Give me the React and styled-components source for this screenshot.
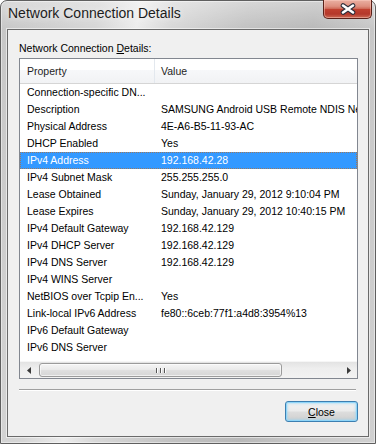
import React from "react";
import styled, { createGlobalStyle, css } from "styled-components";

const GlobalStyle = createGlobalStyle`
  html, body { margin: 0; padding: 0; background: #ffffff; }
  body {
    width: 376px; height: 444px; overflow: hidden;
    font-family: "Liberation Sans", Arial, sans-serif;
  }
  * { box-sizing: border-box; }
`;

const Window = styled.div`
  width: 376px;
  height: 444px;
  border: 1px solid #5f5f5f;
  border-radius: 7px 7px 0 0;
  background:
    linear-gradient(to bottom, rgba(255,255,255,0.35) 0px, rgba(255,255,255,0) 28px),
    linear-gradient(100deg, #c6c6c6 0%, #d6d6d6 22%, #ececec 31%, #d8d8d8 38%, #c2c2c2 55%, #b9b9b9 70%, #c9c9c9 85%, #d0d0d0 100%);
  box-shadow: inset 0 0 0 1px rgba(255,255,255,0.45);
  display: flex;
  flex-direction: column;
  padding: 0 6px 6px 6px;
`;

const TitleBar = styled.div`
  height: 28px;
  display: flex;
  align-items: flex-start;
`;

const Title = styled.div`
  margin: 4px 0 0 1px;
  font-family: "Liberation Sans", Arial, sans-serif;
  font-size: 14px;
  line-height: 16px;
  color: #1c1c1c;
  text-shadow: 0 0 6px rgba(255,255,255,0.9);
`;

const CloseCaption = styled.div`
  margin: -1px -3px 0 auto;
  width: 49px;
  height: 19px;
  border: 1px solid #5a2119;
  border-top: none;
  border-radius: 0 0 5px 5px;
  background: linear-gradient(to bottom, #eab0a2 0%, #de8f7f 35%, #cf6a58 48%, #c0402f 52%, #b5382a 78%, #cc6a55 100%);
  box-shadow: inset 0 0 0 1px rgba(255,210,200,0.45);
  display: flex;
  align-items: center;
  justify-content: center;
`;

const Client = styled.div`
  flex: 1;
  border: 1px solid #6a6a6a;
  box-shadow: 0 0 0 1px rgba(255,255,255,0.55);
  background: #f0f0f0;
  padding: 12px 10px 0 11px;
  display: flex;
  flex-direction: column;
  font-size: 10.5px;
  color: #000;
`;

const Label = styled.div`
  line-height: 12px;
  margin-bottom: 4px;
`;

const Ul = styled.span`
  text-decoration: underline;
`;

const ListBox = styled.div`
  height: 321px;
  border: 1px solid #828790;
  background: #ffffff;
  display: flex;
  flex-direction: column;
  overflow: hidden;
`;

const cols = css`
  display: grid;
  grid-template-columns: 135px 1fr;
`;

const Header = styled.div`
  ${cols};
  height: 25px;
  border-bottom: 1px solid #d5d5d5;
  background: linear-gradient(to bottom, #ffffff 0%, #ffffff 45%, #f7f8fa 46%, #f1f2f4 100%);
  color: #1e1e1e;
`;

const HeaderCell = styled.div`
  display: flex;
  align-items: center;
  padding-left: ${p => (p.$first ? "7px" : "6px")};
  border-right: ${p => (p.$first ? "1px solid #e3e8ee" : "none")};
  white-space: nowrap;
  overflow: hidden;
`;

const Rows = styled.div`
  flex: 1;
  overflow: hidden;
`;

const Row = styled.div`
  ${cols};
  height: 17px;
  line-height: 17px;
  white-space: nowrap;
  ${p =>
    p.$selected &&
    css`
      background: #3399ff;
      color: #ffffff;
      outline: 1px dotted rgba(190, 110, 40, 0.75);
      outline-offset: -1px;
    `}
`;

const Cell = styled.div`
  overflow: hidden;
  text-overflow: clip;
  padding-left: ${p => (p.$first ? "7px" : "6px")};
`;

const HScroll = styled.div`
  height: 17px;
  display: flex;
  background: linear-gradient(to bottom, #e3e3e3 0%, #eeeeee 40%, #f2f2f2 100%);
  border-top: 1px solid #f6f6f6;
`;

const ArrowBtn = styled.div`
  width: 17px;
  display: flex;
  align-items: center;
  justify-content: center;
`;

const Track = styled.div`
  flex: 1;
  display: flex;
  align-items: center;
`;

const Thumb = styled.div`
  width: 243px;
  height: 14px;
  margin-left: 2px;
  border: 1px solid #9b9b9b;
  border-radius: 3px;
  background: linear-gradient(to bottom, #f5f5f5 0%, #ebebeb 45%, #dedede 55%, #d6d6d6 100%);
  box-shadow: inset 0 0 0 1px rgba(255,255,255,0.6);
  display: flex;
  align-items: center;
  justify-content: center;
  gap: 1px;
`;

const Grip = styled.span`
  width: 1px;
  height: 5px;
  background: #555;
  box-shadow: 1px 0 0 #fff;
  margin: 0 1px;
`;

const Separator = styled.div`
  margin: 10px 2px 0 0;
  border-top: 1px solid #a0a0a0;
  border-bottom: 1px solid #ffffff;
`;

const Footer = styled.div`
  margin-top: 10px;
  display: flex;
  justify-content: flex-end;
`;

const Button = styled.button`
  width: 73px;
  height: 21px;
  padding: 0;
  border: 1px solid #3c7fb1;
  border-radius: 3px;
  background: linear-gradient(to bottom, #f2f2f2 0%, #ebebeb 48%, #dddddd 52%, #cfcfcf 100%);
  box-shadow: inset 0 0 0 1px #8fd5f8, inset 0 0 2px 2px rgba(143,213,248,0.5);
  font-family: "Liberation Sans", Arial, sans-serif;
  font-size: 10.5px;
  color: #000;
`;

const rows = [
  ["Connection-specific DN...", ""],
  ["Description", "SAMSUNG Android USB Remote NDIS Network Device"],
  ["Physical Address", "4E-A6-B5-11-93-AC"],
  ["DHCP Enabled", "Yes"],
  ["IPv4 Address", "192.168.42.28", true],
  ["IPv4 Subnet Mask", "255.255.255.0"],
  ["Lease Obtained", "Sunday, January 29, 2012 9:10:04 PM"],
  ["Lease Expires", "Sunday, January 29, 2012 10:40:15 PM"],
  ["IPv4 Default Gateway", "192.168.42.129"],
  ["IPv4 DHCP Server", "192.168.42.129"],
  ["IPv4 DNS Server", "192.168.42.129"],
  ["IPv4 WINS Server", ""],
  ["NetBIOS over Tcpip En...", "Yes"],
  ["Link-local IPv6 Address", "fe80::6ceb:77f1:a4d8:3954%13"],
  ["IPv6 Default Gateway", ""],
  ["IPv6 DNS Server", ""],
];

export default function App() {
  return (
    <>
      <GlobalStyle />
      <Window>
        <TitleBar>
          <Title>Network Connection Details</Title>
          <CloseCaption>
            <svg width="16" height="12" viewBox="0 0 16 12">
              <path d="M3 2.5 L13 9.5 M13 2.5 L3 9.5" stroke="#2e2e3a" strokeWidth="4.6" strokeLinecap="round" />
              <path d="M3 2.5 L13 9.5 M13 2.5 L3 9.5" stroke="#ffffff" strokeWidth="2.6" strokeLinecap="round" />
            </svg>
          </CloseCaption>
        </TitleBar>
        <Client>
          <Label>
            Network Connection <Ul>D</Ul>etails:
          </Label>
          <ListBox>
            <Header>
              <HeaderCell $first>Property</HeaderCell>
              <HeaderCell>Value</HeaderCell>
            </Header>
            <Rows>
              {rows.map(([k, v, sel]) => (
                <Row key={k} $selected={sel}>
                  <Cell $first>{k}</Cell>
                  <Cell>{v}</Cell>
                </Row>
              ))}
            </Rows>
            <HScroll>
              <ArrowBtn>
                <svg width="4" height="7" viewBox="0 0 4 7">
                  <path d="M4 0 L0 3.5 L4 7 Z" fill="#3a3a3a" />
                </svg>
              </ArrowBtn>
              <Track>
                <Thumb>
                  <Grip />
                  <Grip />
                  <Grip />
                </Thumb>
              </Track>
              <ArrowBtn>
                <svg width="4" height="7" viewBox="0 0 4 7">
                  <path d="M0 0 L4 3.5 L0 7 Z" fill="#3a3a3a" />
                </svg>
              </ArrowBtn>
            </HScroll>
          </ListBox>
          <Separator />
          <Footer>
            <Button>
              <Ul>C</Ul>lose
            </Button>
          </Footer>
        </Client>
      </Window>
    </>
  );
}
